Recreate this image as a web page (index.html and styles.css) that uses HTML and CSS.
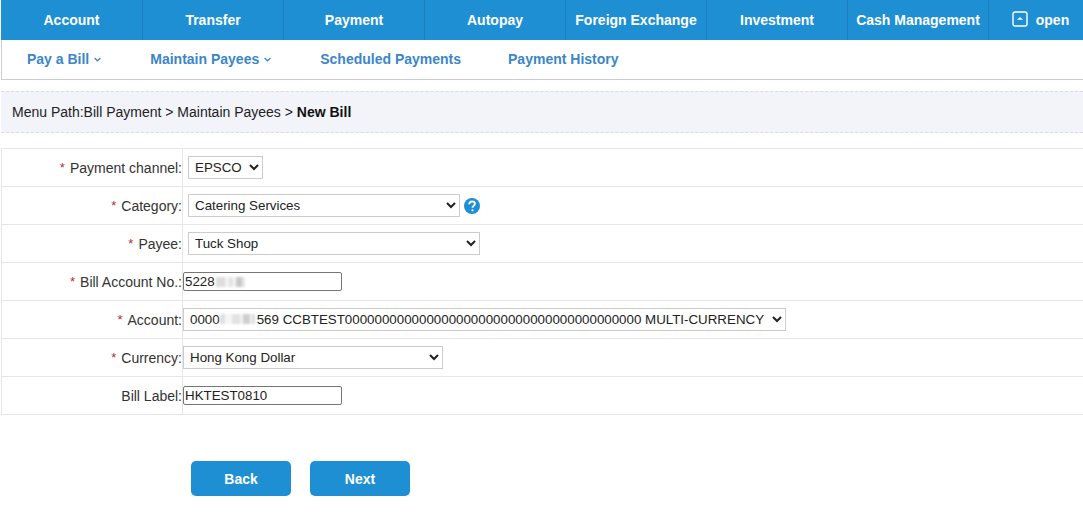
FILE: index.html
```html
<!DOCTYPE html>
<html lang="en">
<head>
<meta charset="utf-8">
<title>New Bill</title>
<link rel="stylesheet" href="styles.css">
</head>
<body>
<nav class="topnav">
  <a class="topitem first">Account</a>
  <a class="topitem">Transfer</a>
  <a class="topitem">Payment</a>
  <a class="topitem">Autopay</a>
  <a class="topitem">Foreign Exchange</a>
  <a class="topitem">Investment</a>
  <a class="topitem">Cash Management</a>
  <a class="topitem openitem">
    <svg class="openicon" width="16" height="16" viewBox="0 0 16 16"><rect x="1" y="1" width="14" height="14" rx="2" fill="none" stroke="#fff" stroke-width="1.4"/><path d="M5 8.800 8 6l3 2.800z" fill="#fff"/></svg>
    <span>open</span>
  </a>
</nav>
<nav class="subnav">
  <a class="subitem sub1">Pay a Bill<svg class="caret" width="7" height="5" viewBox="0 0 7 5"><path d="M.6 1l2.900 2.800L6.400 1" fill="none" stroke="#3a86c8" stroke-width="1.200"/></svg></a>
  <a class="subitem sub2">Maintain Payees<svg class="caret" width="7" height="5" viewBox="0 0 7 5"><path d="M.6 1l2.900 2.800L6.400 1" fill="none" stroke="#3a86c8" stroke-width="1.200"/></svg></a>
  <a class="subitem sub3">Scheduled Payments</a>
  <a class="subitem">Payment History</a>
</nav>
<div class="crumb">Menu Path:Bill Payment &gt; Maintain Payees &gt; <b>New Bill</b></div>
<div class="form">
  <div class="row">
    <div class="lab"><i>*</i>Payment channel:</div>
    <div class="val pad"><select class="sel w75"><option>EPSCO</option></select></div>
  </div>
  <div class="row">
    <div class="lab"><i>*</i>Category:</div>
    <div class="val pad"><select class="sel w272"><option>Catering Services</option></select>
      <svg class="help" width="16" height="16" viewBox="0 0 16 16"><circle cx="8" cy="8" r="8" fill="#1f8fd3"/><path d="M5.200 6.200C5.300 4.500 6.500 3.500 8.100 3.500c1.600 0 2.800 1 2.800 2.300 0 1.100-.7 1.600-1.400 2.100-.7.5-1 .9-1 1.600v.3" fill="none" stroke="#fff" stroke-width="1.800"/><circle cx="8.500" cy="12.300" r="1.100" fill="#fff"/></svg>
    </div>
  </div>
  <div class="row">
    <div class="lab"><i>*</i>Payee:</div>
    <div class="val pad"><select class="sel w292"><option>Tuck Shop</option></select></div>
  </div>
  <div class="row">
    <div class="lab"><i>*</i>Bill Account No.:</div>
    <div class="val"><div class="masked"><input class="inp" type="text" value="5228"><span class="blur b1"></span></div></div>
  </div>
  <div class="row">
    <div class="lab"><i>*</i>Account:</div>
    <div class="val"><div class="masked"><select class="sel w603"><option>0000&#8199;&#8199;&#8199;&#8199;&#8199;569 CCBTEST0000000000000000000000000000000000000000 MULTI-CURRENCY</option></select><span class="blur b2"></span></div></div>
  </div>
  <div class="row">
    <div class="lab"><i>*</i>Currency:</div>
    <div class="val"><select class="sel w260"><option>Hong Kong Dollar</option></select></div>
  </div>
  <div class="row">
    <div class="lab">Bill Label:</div>
    <div class="val"><input class="inp" type="text" value="HKTEST0810"></div>
  </div>
</div>
<div class="actions">
  <button class="btn" type="button">Back</button>
  <button class="btn" type="button">Next</button>
</div>
</body>
</html>
```
FILE: styles.css
```css
html, body { margin: 0; padding: 0; }
body { font-family: "Liberation Sans", Arial, sans-serif; font-size: 14px; color: #333; background: #fff; overflow: hidden; }
.topnav { display: flex; height: 40px; margin-left: 1px; background: #1f8fd3; }
.topitem { box-sizing: border-box; width: 141px; display: flex; align-items: center; justify-content: center; gap: 8px; color: #fff; font-weight: 700; font-size: 14px; border-right: 1px solid #1b7fbd; }
.first { width: 142px; }
.openitem { width: 94px; border-right: 0; padding-left: 9px; }
.openicon { display: block; margin-top: -2px; }
.subnav { box-sizing: border-box; height: 40px; margin-left: 1px; display: flex; align-items: center; padding: 0 0 1px 25px; border-left: 1px solid #ccc; border-bottom: 1px solid #ccc; }
.subitem { color: #3a86c8; font-weight: 700; font-size: 14px; white-space: nowrap; }
.caret { margin-left: 5px; vertical-align: 2px; }
.sub1 { margin-right: 49px; }
.sub2 { margin-right: 49px; }
.sub3 { margin-right: 47px; }
.crumb { box-sizing: border-box; height: 42px; margin: 11px 0 15px 1px; padding: 0 0 1px 11px; display: flex; align-items: center; white-space: pre; background: #f2f4f9; border-top: 1px dashed #dcdde2; border-bottom: 1px dashed #dcdde2; color: #222; }
.crumb b { color: #111; }
.form { margin-left: 1px; border-top: 1px solid #e6e6e6; }
.row { display: flex; height: 38px; box-sizing: border-box; border-bottom: 1px solid #e6e6e6; }
.lab { box-sizing: border-box; width: 182px; display: flex; justify-content: flex-end; align-items: center; border-left: 1px solid #e6e6e6; border-right: 1px solid #e6e6e6; color: #333; }
.lab i { font-style: normal; color: #b03030; margin-right: 5px; font-size: 13px; }
.val { display: flex; align-items: center; gap: 4px; }
.pad { padding-left: 5px; }
.sel { height: 23px; box-sizing: border-box; font-family: "Liberation Sans", Arial, sans-serif; font-size: 13.333px; color: #222; background: #fff; border: 1px solid #ccc; padding: 0 2px; border-radius: 0; }
.w75 { width: 75px; }
.w272 { width: 272px; }
.w292 { width: 292px; }
.w603 { width: 603px; }
.w260 { width: 260px; }
.help { display: block; }
.inp { box-sizing: border-box; width: 159px; height: 19px; padding: 0 1px; font-family: "Liberation Sans", Arial, sans-serif; font-size: 13.333px; color: #222; border: 1px solid #767676; border-radius: 2px; background: #fff; outline: 0; }
.masked { position: relative; display: flex; }
.blur { position: absolute; height: 10px; filter: blur(1px); }
.b1 { left: 33px; top: 5px; width: 29px; background: linear-gradient(90deg, #ddd 0 30%, #f2f2f2 30% 45%, #e4e4e4 45% 60%, #f4f4f4 60% 70%, #c8c8c8 70% 88%, #e6e6e6 88% 100%); }
.b2 { left: 37px; top: 6px; width: 35px; background: linear-gradient(90deg, #e0e0e0 0 14%, #f6f6f6 14% 34%, #e2e2e2 34% 58%, #f2f2f2 58% 66%, #cfcfcf 66% 86%, #f4f4f4 86% 92%, #dcdcdc 92% 100%); }
.actions { display: flex; gap: 19px; margin: 46px 0 0 191px; }
.btn { width: 100px; height: 35px; border: 0; border-radius: 5px; background: #1f8fd3; color: #fff; font-family: "Liberation Sans", Arial, sans-serif; font-weight: 700; font-size: 14px; padding: 0; }
```
